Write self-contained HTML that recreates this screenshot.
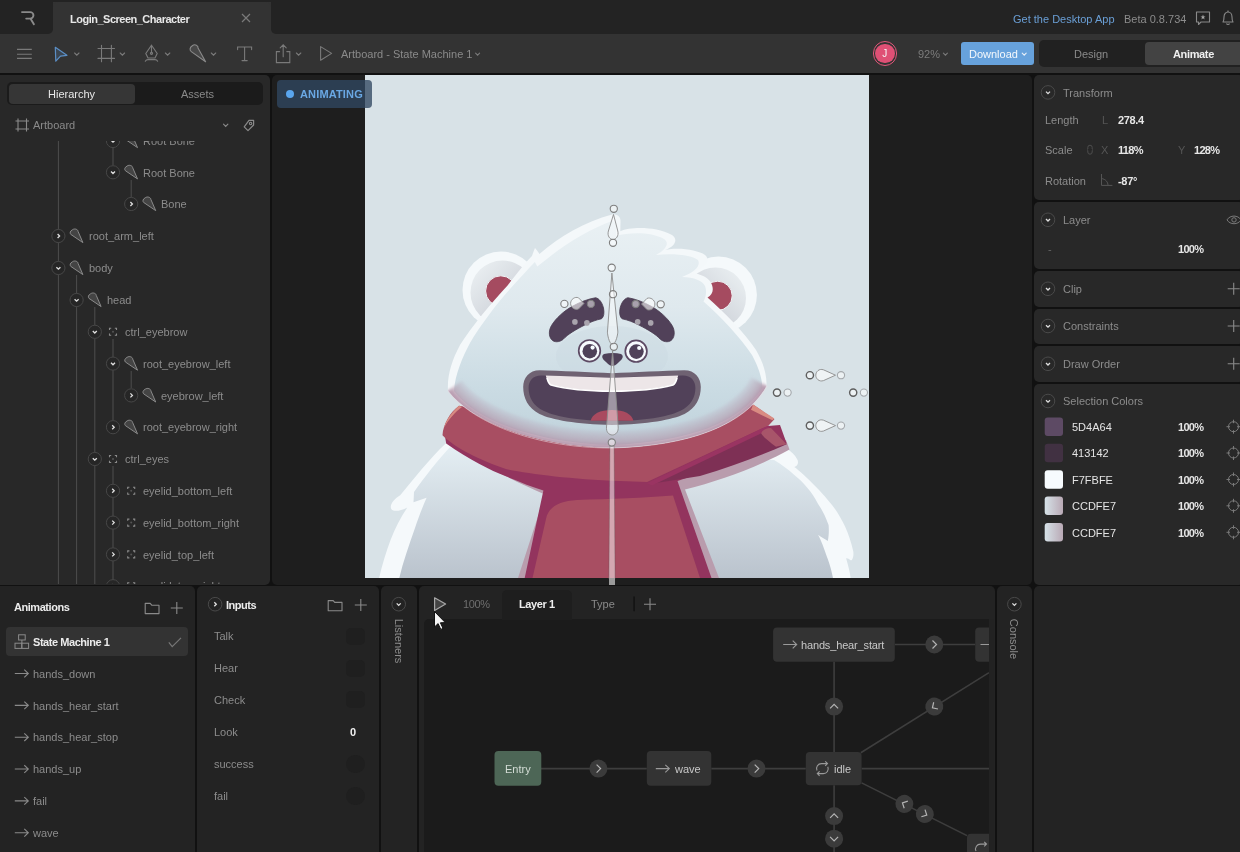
<!DOCTYPE html>
<html><head><meta charset="utf-8">
<style>
*{box-sizing:border-box;margin:0;padding:0}
html,body{width:1240px;height:852px;overflow:hidden;background:#111;font-family:"Liberation Sans",sans-serif;font-size:11px;color:#8c8c8c}
.a{position:absolute}
.t{position:absolute;white-space:nowrap;line-height:14px;will-change:transform}
.w{color:#e6e6e6}
.b{font-weight:bold;letter-spacing:-0.35px}
svg{position:absolute;overflow:visible}
</style></head><body>

<!-- TAB BAR -->
<div class="a" style="left:0;top:0;width:1240px;height:34px;background:#333"></div>
<div class="a" style="left:0;top:0;width:53px;height:34px;background:#232323;border-bottom-right-radius:5px"></div>
<div class="a" style="left:271px;top:0;width:969px;height:34px;background:#232323;border-bottom-left-radius:5px"></div>
<div class="a" style="left:53px;top:0;width:218px;height:2px;background:#232323"></div>
<div class="a" style="left:53px;top:2px;width:218px;height:6px;background:#333;border-radius:5px 5px 0 0"></div>

<!-- TOOLBAR -->
<div class="a" style="left:0;top:34px;width:1240px;height:38.5px;background:#333"></div>


<!-- TAB CONTENT -->
<svg style="left:0;top:0" width="60" height="34"><path d="M22,12.1 H30.2 A3.25,3.25 0 0 1 30.2,18.6 H26.2 M30.6,18.8 L33.9,24.2" fill="none" stroke="#8a8a8a" stroke-width="1.9" stroke-linecap="round"/></svg>
<div class="t w b" style="left:70px;top:12px;letter-spacing:-0.5px;color:#e8e8e8">Login_Screen_Character</div>
<svg style="left:240px;top:12px" width="12" height="12"><path d="M2,2 L10,10 M10,2 L2,10" stroke="#7a7a7a" stroke-width="1.2"/></svg>
<div class="t" style="left:1013px;top:12px;color:#6a9fd6">Get the Desktop App</div>
<div class="t" style="left:1123.5px;top:12px;color:#8c8c8c">Beta 0.8.734</div>
<svg style="left:1194px;top:10px" width="18" height="16"><path d="M2.5,2 H15.5 V12 H7 L4.5,14.5 V12 H2.5 Z" fill="none" stroke="#8a8a8a" stroke-width="1.1" stroke-linejoin="round"/><path d="M9,4.5 L9.7,6.5 L11.5,6.5 L10,7.6 L10.6,9.5 L9,8.3 L7.4,9.5 L8,7.6 L6.5,6.5 L8.3,6.5 Z" fill="#aaa"/></svg>
<svg style="left:1219px;top:9px" width="18" height="18"><path d="M4,13 C5,11.5 5,10 5,8 C5,5.2 6.8,3 9,3 C11.2,3 13,5.2 13,8 C13,10 13,11.5 14,13 Z M7.5,14.5 C8,15.8 10,15.8 10.5,14.5" fill="none" stroke="#8a8a8a" stroke-width="1.1" stroke-linejoin="round"/><path d="M9,1.5 V3" stroke="#8a8a8a" stroke-width="1.1"/></svg>

<!-- TOOLBAR CONTENT -->
<svg style="left:0;top:34px" width="320" height="38">
 <g fill="none" stroke="#7a7a7a" stroke-width="1.1">
  <path d="M17,15.4 H31.8 M17,20.2 H31.8 M17,24.4 H31.8"/>
 </g>
 <path d="M55.3,13.3 L66.9,21.3 L60.5,22.2 L55.8,27.2 Z" fill="#3b4652" stroke="#5b8fc6" stroke-width="1.2" stroke-linejoin="round"/>
 <g fill="none" stroke="#7a7a7a" stroke-width="1.1" stroke-linecap="round">
  <path d="M74.6,19 L76.8,21.2 L79,19"/>
  <path d="M101.5,11.3 V27.8 M111.4,11.3 V27.8 M98,14.5 H114.5 M98,24.4 H114.5"/>
  <path d="M120.2,19 L122.4,21.2 L124.6,19"/>
  <path d="M151.5,11.2 L157.2,19.5 L155,24 H148 L145.8,19.5 Z M151.5,11.2 V19 M145.3,27.2 C146,25.8 147,25.6 148,25.6 H155 C156,25.6 157,25.8 157.6,27.2"/>
  <circle cx="151.5" cy="19.3" r="1.1"/>
  <path d="M165.4,19 L167.6,21.2 L169.8,19"/>
  <path d="M211.3,19 L213.5,21.2 L215.7,19"/>
  <path d="M237.6,15.6 V13 H251.6 V15.6 M244.6,13 V26.6 M242,26.6 H247.2"/>
  <path d="M279.6,17.6 H276.4 V28.6 H289.8 V17.6 H286.8 M283.2,10.8 V22.8 M280.2,13.8 L283.2,10.8 L286.2,13.8"/>
  <path d="M296.4,19 L298.6,21.2 L300.8,19"/>
  <path d="M320.6,12.6 V26.2 L331.6,19.4 Z" stroke-linejoin="round"/>
 </g>
 <path d="M192.3,11.8 C195,9.6 198.5,11.6 198,14 L205.6,27.7 L191.3,17.6 C189.4,16.2 189.6,13.6 192.3,11.8 Z" fill="#484848" stroke="#8a8a8a" stroke-width="1.1" stroke-linejoin="round"/>
</svg>
<div class="t" style="left:340.5px;top:46.6px;color:#8a8a8a">Artboard - State Machine 1</div>
<svg style="left:470px;top:34px" width="12" height="38"><path d="M5.6,19.2 L7.6,21.2 L9.6,19.2" fill="none" stroke="#7a7a7a" stroke-width="1.1" stroke-linecap="round"/></svg>
<!-- avatar -->
<div class="a" style="left:872.9px;top:41.4px;width:24.5px;height:24.5px;border-radius:50%;border:1.4px solid #e0587a;background:#333"></div>
<div class="a" style="left:875.3px;top:43.8px;width:19.7px;height:19.7px;border-radius:50%;background:#df5075"></div>
<div class="t" style="left:875.3px;top:46.8px;width:19.7px;text-align:center;font-size:10px;color:#f6f6f6">J</div>
<div class="t" style="left:918px;top:46.6px;color:#7c7c7c">92%</div>
<svg style="left:940px;top:34px" width="12" height="38"><path d="M3.4,19.2 L5.4,21.2 L7.4,19.2" fill="none" stroke="#7a7a7a" stroke-width="1.1" stroke-linecap="round"/></svg>
<div class="a" style="left:961.2px;top:42.3px;width:73px;height:23px;border-radius:3px;background:#67a2dc"></div>
<div class="t" style="left:968.5px;top:46.6px;color:#f4f8fc">Download</div>
<svg style="left:1020px;top:34px" width="12" height="38"><path d="M2.2,19.2 L4.2,21.2 L6.2,19.2" fill="none" stroke="#e8f0f8" stroke-width="1.1" stroke-linecap="round"/></svg>
<div class="a" style="left:1039.3px;top:40.1px;width:210px;height:26.7px;border-radius:5px;background:#212121"></div>
<div class="a" style="left:1145px;top:42.3px;width:100px;height:23px;border-radius:4px;background:#434343"></div>
<div class="t" style="left:1073.5px;top:46.6px;color:#8a8a8a">Design</div>
<div class="t b" style="left:1173px;top:46.6px;color:#f0f0f0">Animate</div>

<!-- LEFT PANEL -->
<div class="a" style="left:0;top:75px;width:270.2px;height:509.6px;background:#282828;border-radius:0 5px 5px 0"></div>
<!-- LEFT CONTENT -->
<div class="a" style="left:0;top:141px;width:270px;height:443px;overflow:hidden">
<div class="a" style="left:0;top:-141px;width:270px;height:727px">
<svg style="left:0;top:0" width="270" height="727"><path d="M58.4,141 V584" stroke="#4e4e4e" stroke-width="1"/><path d="M76.6,275 V584" stroke="#4e4e4e" stroke-width="1"/><path d="M94.8,307 V584" stroke="#4e4e4e" stroke-width="1"/><path d="M113,339 V420" stroke="#4e4e4e" stroke-width="1"/><path d="M113,466 V584" stroke="#4e4e4e" stroke-width="1"/><path d="M131.2,371 V388" stroke="#4e4e4e" stroke-width="1"/><path d="M113,141 V165" stroke="#4e4e4e" stroke-width="1"/><path d="M131.2,180 V197" stroke="#4e4e4e" stroke-width="1"/><circle cx="113.0" cy="141" r="6.6" fill="#262626" stroke="#474747" stroke-width="1"/><path d="M111.0,140.2 L113.0,142.2 L115.0,140.2" fill="none" stroke="#e0e0e0" stroke-width="1.3"/><path d="M126.99999999999999,134.8 C129.39999999999998,133 132.7,134.5 132.7,136.5 L137.5,147.6 L125.39999999999999,139.4 C124.19999999999999,138.2 124.6,136 126.99999999999999,134.8 Z" fill="#444" stroke="#8a8a8a" stroke-width="1" stroke-linejoin="round"/><circle cx="113.0" cy="172.3" r="6.6" fill="#262626" stroke="#474747" stroke-width="1"/><path d="M111.0,171.5 L113.0,173.5 L115.0,171.5" fill="none" stroke="#e0e0e0" stroke-width="1.3"/><path d="M126.99999999999999,166.10000000000002 C129.39999999999998,164.3 132.7,165.8 132.7,167.8 L137.5,178.9 L125.39999999999999,170.70000000000002 C124.19999999999999,169.5 124.6,167.3 126.99999999999999,166.10000000000002 Z" fill="#444" stroke="#8a8a8a" stroke-width="1" stroke-linejoin="round"/><circle cx="131.2" cy="204" r="6.6" fill="#262626" stroke="#474747" stroke-width="1"/><path d="M130.39999999999998,202 L132.39999999999998,204 L130.39999999999998,206" fill="none" stroke="#e0e0e0" stroke-width="1.3"/><path d="M145.2,197.8 C147.59999999999997,196 150.89999999999998,197.5 150.89999999999998,199.5 L155.7,210.6 L143.59999999999997,202.4 C142.39999999999998,201.2 142.79999999999998,199 145.2,197.8 Z" fill="#444" stroke="#8a8a8a" stroke-width="1" stroke-linejoin="round"/><circle cx="58.4" cy="236" r="6.6" fill="#262626" stroke="#474747" stroke-width="1"/><path d="M57.6,234 L59.6,236 L57.6,238" fill="none" stroke="#e0e0e0" stroke-width="1.3"/><path d="M72.39999999999999,229.8 C74.8,228 78.1,229.5 78.1,231.5 L82.89999999999999,242.6 L70.8,234.4 C69.6,233.2 70.0,231 72.39999999999999,229.8 Z" fill="#444" stroke="#8a8a8a" stroke-width="1" stroke-linejoin="round"/><circle cx="58.4" cy="268" r="6.6" fill="#262626" stroke="#474747" stroke-width="1"/><path d="M56.4,267.2 L58.4,269.2 L60.4,267.2" fill="none" stroke="#e0e0e0" stroke-width="1.3"/><path d="M72.39999999999999,261.8 C74.8,260 78.1,261.5 78.1,263.5 L82.89999999999999,274.6 L70.8,266.4 C69.6,265.2 70.0,263 72.39999999999999,261.8 Z" fill="#444" stroke="#8a8a8a" stroke-width="1" stroke-linejoin="round"/><circle cx="76.6" cy="300" r="6.6" fill="#262626" stroke="#474747" stroke-width="1"/><path d="M74.6,299.2 L76.6,301.2 L78.6,299.2" fill="none" stroke="#e0e0e0" stroke-width="1.3"/><path d="M90.6,293.8 C93.0,292 96.3,293.5 96.3,295.5 L101.1,306.6 L89.0,298.4 C87.8,297.2 88.2,295 90.6,293.8 Z" fill="#444" stroke="#8a8a8a" stroke-width="1" stroke-linejoin="round"/><circle cx="94.8" cy="331.8" r="6.6" fill="#262626" stroke="#474747" stroke-width="1"/><path d="M92.8,331.0 L94.8,333.0 L96.8,331.0" fill="none" stroke="#e0e0e0" stroke-width="1.3"/><path d="M109.5,330.0 V328.3 H111.2 M114.8,328.3 H116.5 V330.0 M116.5,333.6 V335.3 H114.8 M111.2,335.3 H109.5 V333.6" fill="none" stroke="#8a8a8a" stroke-width="1.1"/><circle cx="113.0" cy="331.8" r="1" fill="#555"/><circle cx="113.0" cy="363.6" r="6.6" fill="#262626" stroke="#474747" stroke-width="1"/><path d="M111.0,362.8 L113.0,364.8 L115.0,362.8" fill="none" stroke="#e0e0e0" stroke-width="1.3"/><path d="M126.99999999999999,357.40000000000003 C129.39999999999998,355.6 132.7,357.1 132.7,359.1 L137.5,370.20000000000005 L125.39999999999999,362.0 C124.19999999999999,360.8 124.6,358.6 126.99999999999999,357.40000000000003 Z" fill="#444" stroke="#8a8a8a" stroke-width="1" stroke-linejoin="round"/><circle cx="131.2" cy="395.4" r="6.6" fill="#262626" stroke="#474747" stroke-width="1"/><path d="M130.39999999999998,393.4 L132.39999999999998,395.4 L130.39999999999998,397.4" fill="none" stroke="#e0e0e0" stroke-width="1.3"/><path d="M145.2,389.2 C147.59999999999997,387.4 150.89999999999998,388.9 150.89999999999998,390.9 L155.7,402.0 L143.59999999999997,393.79999999999995 C142.39999999999998,392.59999999999997 142.79999999999998,390.4 145.2,389.2 Z" fill="#444" stroke="#8a8a8a" stroke-width="1" stroke-linejoin="round"/><circle cx="113.0" cy="427.2" r="6.6" fill="#262626" stroke="#474747" stroke-width="1"/><path d="M112.2,425.2 L114.2,427.2 L112.2,429.2" fill="none" stroke="#e0e0e0" stroke-width="1.3"/><path d="M126.99999999999999,421.0 C129.39999999999998,419.2 132.7,420.7 132.7,422.7 L137.5,433.8 L125.39999999999999,425.59999999999997 C124.19999999999999,424.4 124.6,422.2 126.99999999999999,421.0 Z" fill="#444" stroke="#8a8a8a" stroke-width="1" stroke-linejoin="round"/><circle cx="94.8" cy="459" r="6.6" fill="#262626" stroke="#474747" stroke-width="1"/><path d="M92.8,458.2 L94.8,460.2 L96.8,458.2" fill="none" stroke="#e0e0e0" stroke-width="1.3"/><path d="M109.5,457.2 V455.5 H111.2 M114.8,455.5 H116.5 V457.2 M116.5,460.8 V462.5 H114.8 M111.2,462.5 H109.5 V460.8" fill="none" stroke="#8a8a8a" stroke-width="1.1"/><circle cx="113.0" cy="459" r="1" fill="#555"/><circle cx="113.0" cy="490.8" r="6.6" fill="#262626" stroke="#474747" stroke-width="1"/><path d="M112.2,488.8 L114.2,490.8 L112.2,492.8" fill="none" stroke="#e0e0e0" stroke-width="1.3"/><path d="M127.69999999999999,489.0 V487.3 H129.39999999999998 M133.0,487.3 H134.7 V489.0 M134.7,492.6 V494.3 H133.0 M129.39999999999998,494.3 H127.69999999999999 V492.6" fill="none" stroke="#8a8a8a" stroke-width="1.1"/><circle cx="131.2" cy="490.8" r="1" fill="#555"/><circle cx="113.0" cy="522.6" r="6.6" fill="#262626" stroke="#474747" stroke-width="1"/><path d="M112.2,520.6 L114.2,522.6 L112.2,524.6" fill="none" stroke="#e0e0e0" stroke-width="1.3"/><path d="M127.69999999999999,520.8000000000001 V519.1 H129.39999999999998 M133.0,519.1 H134.7 V520.8000000000001 M134.7,524.4 V526.1 H133.0 M129.39999999999998,526.1 H127.69999999999999 V524.4" fill="none" stroke="#8a8a8a" stroke-width="1.1"/><circle cx="131.2" cy="522.6" r="1" fill="#555"/><circle cx="113.0" cy="554.4" r="6.6" fill="#262626" stroke="#474747" stroke-width="1"/><path d="M112.2,552.4 L114.2,554.4 L112.2,556.4" fill="none" stroke="#e0e0e0" stroke-width="1.3"/><path d="M127.69999999999999,552.6 V550.9 H129.39999999999998 M133.0,550.9 H134.7 V552.6 M134.7,556.1999999999999 V557.9 H133.0 M129.39999999999998,557.9 H127.69999999999999 V556.1999999999999" fill="none" stroke="#8a8a8a" stroke-width="1.1"/><circle cx="131.2" cy="554.4" r="1" fill="#555"/><circle cx="113.0" cy="586.2" r="6.6" fill="#262626" stroke="#474747" stroke-width="1"/><path d="M112.2,584.2 L114.2,586.2 L112.2,588.2" fill="none" stroke="#e0e0e0" stroke-width="1.3"/><path d="M127.69999999999999,584.4000000000001 V582.7 H129.39999999999998 M133.0,582.7 H134.7 V584.4000000000001 M134.7,588.0 V589.7 H133.0 M129.39999999999998,589.7 H127.69999999999999 V588.0" fill="none" stroke="#8a8a8a" stroke-width="1.1"/><circle cx="131.2" cy="586.2" r="1" fill="#555"/></svg>
<div class="t" style="left:143.2px;top:134.2px">Root Bone</div>
<div class="t" style="left:143.2px;top:165.5px">Root Bone</div>
<div class="t" style="left:161.4px;top:197.2px">Bone</div>
<div class="t" style="left:88.6px;top:229.2px">root_arm_left</div>
<div class="t" style="left:88.6px;top:261.2px">body</div>
<div class="t" style="left:106.8px;top:293.2px">head</div>
<div class="t" style="left:125.0px;top:325.0px">ctrl_eyebrow</div>
<div class="t" style="left:143.2px;top:356.8px">root_eyebrow_left</div>
<div class="t" style="left:161.4px;top:388.6px">eyebrow_left</div>
<div class="t" style="left:143.2px;top:420.4px">root_eyebrow_right</div>
<div class="t" style="left:125.0px;top:452.2px">ctrl_eyes</div>
<div class="t" style="left:143.2px;top:484.0px">eyelid_bottom_left</div>
<div class="t" style="left:143.2px;top:515.8px">eyelid_bottom_right</div>
<div class="t" style="left:143.2px;top:547.6px">eyelid_top_left</div>
<div class="t" style="left:143.2px;top:579.4px">eyelid_top_right</div>
</div></div>
<div class="a" style="left:7px;top:82.3px;width:256px;height:22.5px;border-radius:5px;background:#1b1b1b"></div>
<div class="a" style="left:8.5px;top:84px;width:126px;height:19.5px;border-radius:4px;background:#363636"></div>
<div class="t" style="left:47.5px;top:87.4px;color:#e8e8e8">Hierarchy</div>
<div class="t" style="left:181px;top:87.4px;color:#8a8a8a">Assets</div>
<svg style="left:0;top:110px" width="270" height="30"><g fill="none" stroke="#8a8a8a" stroke-width="1.1"><path d="M18,8.5 V21.5 M26.5,8.5 V21.5 M15.5,11 H29 M15.5,19 H29"/><path d="M223.5,14.2 L225.7,16.4 L227.9,14.2" stroke-linecap="round"/><path d="M249,10.3 H253.6 V15 L248,20.6 L244.2,16.8 Z" stroke-linejoin="round" stroke-width="1.2"/><circle cx="250.6" cy="13.5" r="1.2"/></g></svg>
<div class="t" style="left:33.2px;top:118.4px;color:#8a8a8a">Artboard</div>

<!-- CANVAS -->
<div class="a" style="left:272.1px;top:74.5px;width:760.2px;height:510.1px;background:#1e1e1e;border-radius:5px"></div>
<div class="a" style="left:365px;top:75px;width:504px;height:503px;background:#d8e2e7"></div>

<!-- CANVAS CONTENT -->
<svg style="left:365px;top:75px" width="504" height="503" viewBox="365 75 504 503">
<defs>
 <linearGradient id="hg" x1="0" y1="213" x2="0" y2="448" gradientUnits="userSpaceOnUse">
  <stop offset="0" stop-color="#eaf1f4"/><stop offset="0.4" stop-color="#dfe9ee"/><stop offset="0.75" stop-color="#cadbe3"/><stop offset="1" stop-color="#bfd2db"/>
 </linearGradient>
 <linearGradient id="bg1" x1="0" y1="440" x2="0.3" y2="578" gradientUnits="userSpaceOnUse">
  <stop offset="0" stop-color="#e2ecf1"/><stop offset="1" stop-color="#bcc6d0"/>
 </linearGradient>
 <linearGradient id="bodyg" x1="0" y1="0" x2="0" y2="1">
  <stop offset="0" stop-color="#e3edf2"/><stop offset="1" stop-color="#bec6d0"/>
 </linearGradient>
 <radialGradient id="bodyr" cx="612" cy="455" r="235" gradientUnits="userSpaceOnUse"><stop offset="0.3" stop-color="#e2ecf1"/><stop offset="1" stop-color="#b5bec9"/></radialGradient>
 <linearGradient id="bodyv" x1="0" y1="450" x2="0" y2="578" gradientUnits="userSpaceOnUse"><stop offset="0" stop-color="#e3edf2"/><stop offset="1" stop-color="#bac3cd"/></linearGradient>
 <linearGradient id="earg" x1="0" y1="0" x2="1" y2="1">
  <stop offset="0" stop-color="#eef3f5"/><stop offset="1" stop-color="#c0c4cd"/>
 </linearGradient>
 <linearGradient id="earg2" x1="1" y1="0" x2="0" y2="1">
  <stop offset="0" stop-color="#eef3f5"/><stop offset="1" stop-color="#c0c4cd"/>
 </linearGradient>
 <linearGradient id="ching" x1="0" y1="0" x2="0" y2="1">
  <stop offset="0" stop-color="#c2d4dd" stop-opacity="0"/><stop offset="0.55" stop-color="#bdb0bd"/><stop offset="1" stop-color="#b393a8"/>
 </linearGradient>
</defs>
<rect x="365" y="75" width="504" height="503" fill="#d8e2e7"/>

<!-- BODY -->
<path d="M379.1,578 C386,550 394,527 407.3,507.5 C401,511 394,512 391.4,509.3 C389,505 394,499 400.2,495.2 C413,480 430,458 446,443.2 L786.4,448.5 C791,451 795,455 797,459 C799,462 798,466 794.3,467 C805,475 824,494 833.9,507.4 C842,519 849,532 853.3,551.4 C854,557 852,561 850.6,560.2 C849,559 847,558 846.2,558.5 C848,565 850,572 850.6,578 Z" fill="#f5f9fb"/>
<path d="M449.5,447.6 C438,460 424,478 414,492 L413.5,502.2 L426.6,497.8 C423,506 419,516 415,528 C409,545 403,562 399.3,578 L833,578 C831,568 829,562 826.9,556.7 C824,548 821,540 818.1,534.7 C821,537 825,539 827.8,540.9 C829,535 829,530 828.6,525 C825,515 821,508 818.1,503.9 C812,492 803,482 795.2,475.8 C788,469 781,464 774.1,459.9 Z" fill="url(#bodyv)"/>

<!-- SCARF vertical + shadows -->
<path d="M446,440 C470,458 510,480 545,494.5 L518,578 L719,578 L685,489.5 C720,481 760,466 789.5,449.5 L786,440 Z" fill="#b99cad"/>
<path d="M444,430 L446.2,443.4 C470,460 490,470 505.9,476.3 C520,482 532,487 543.4,490.4 L524.7,578 L711.5,578 L677.5,481 L786.7,443.4 L780,425 L612,440 Z" fill="#93345e"/>
<path d="M532.5,578 L546,519 C548,508 558,501 577,500 C610,499 645,498 673,495.5 L700,578 Z" fill="#a84e62"/>
<!-- scarf band -->
<path d="M442.5,435.2 C443,425 450,412 459,405.8 L612,428 L753,404.5 L774.4,419.2 L768.6,425.4 L647,482 L620,481 C570,479 530,474 505.9,469 C480,460 455,448 442.5,435.2 Z" fill="#a84e62"/>
<path d="M459,405.8 C452,412 446,420 444,428 C448,420 455,412 462,407 Z" fill="#d98b82"/>
<path d="M751,409.8 L753.2,404.6 L774.4,418.6 L772.4,420.3 Z" fill="#d98b82"/>
<!-- flap -->
<path d="M650,484 L769.5,427 L786.7,444.3 C760,456 730,467 700,476 Z" fill="#7e3055"/>
<path d="M647,483.3 L768.6,425.4 L770.5,429 L652,485.5 Z" fill="#9a3462"/>
<path d="M761.2,433.6 C762,430 766,428 771,427.9 L786.7,444.3 L776,446.8 C770,442 764,438 761.2,433.6 Z" fill="#a8556a"/>

<!-- EARS -->
<circle cx="501" cy="290" r="38.5" fill="#f5f9fb"/>
<circle cx="502.5" cy="292.5" r="32" fill="url(#earg)"/>
<circle cx="500.8" cy="291" r="15.2" fill="#a54b60" stroke="#f0f4f6" stroke-width="1"/>
<circle cx="718.5" cy="295" r="38.4" fill="#f5f9fb"/>
<circle cx="715.5" cy="298" r="30.5" fill="url(#earg2)"/>
<circle cx="717.6" cy="295.8" r="14.6" fill="#a54b60" stroke="#f0f4f6" stroke-width="1"/>

<!-- HEAD -->
<path d="M612,214.5 C617,214 621,216 620.5,222 L620.3,231.2 C630,227 655,226 672,235 C678,239 676,246 665.3,250.1 C678,247 698,250 705,255 C711,260 706,268 690,273.3 C700,273 710,278 712,285 C714,291 712,295 707.5,297.5 C724,312 745,333 756,350 C763,362 767,374 766.5,386 C745,425 690,446 612,448 C530,446 470,420 448,391 C447,375 452,360 460,345 C472,326 492,302 508,285 C517,273 525,263 532,256 C533,253 534,250 535,248 C537,250 539,253 539.4,254 C560,236 585,222 612,214.5 Z" fill="#f4f8fa"/>
<path d="M612,221 C615,221 617,224 616,236 C630,232 652,232 664,239 C670,243 666,250 656,255 C672,253 692,255 698,260 C701,266 695,272 682,277 C694,277 703,281 705,286 C707,291 706,297 703.5,301.5 C720,316 741,338 752,355 C758,366 762,377 762.5,388 C740,422 690,442 612,445 C535,443 475,420 454,391 C455,375 462,358 470,343 C480,326 497,303 510,289 C520,278 527,270 534.9,262 L537.3,266.6 C562,246 587,230 612,221 Z" fill="url(#hg)"/>
<!-- chin band -->
<clipPath id="hclip"><path d="M612,214.5 C617,214 621,216 620.5,222 L620.3,231.2 C630,227 655,226 672,235 C678,239 676,246 665.3,250.1 C678,247 698,250 705,255 C711,260 706,268 690,273.3 C700,273 710,278 712,285 C714,291 712,295 707.5,297.5 C724,312 745,333 756,350 C763,362 767,374 766.5,386 C745,425 690,446 612,448 C530,446 470,420 448,391 C447,375 452,360 460,345 C472,326 492,302 508,285 C517,273 525,263 532,256 C533,253 534,250 535,248 C537,250 539,253 539.4,254 C560,236 585,222 612,214.5 Z"/></clipPath>
<filter id="bl1" x="-20%" y="-50%" width="140%" height="200%"><feGaussianBlur stdDeviation="1.5"/></filter>
<filter id="bl4" x="-20%" y="-50%" width="140%" height="200%"><feGaussianBlur stdDeviation="4"/></filter>
<g clip-path="url(#hclip)"><g filter="url(#bl1)" fill="none" stroke="#b393a8"><path d="M448,391 C470,420 530,448 612,448 C690,448 745,425 766.5,386" stroke-width="34" stroke-opacity="0.22"/><path d="M448,391 C470,420 530,448 612,448 C690,448 745,425 766.5,386" stroke-width="26" stroke-opacity="0.22"/><path d="M448,391 C470,420 530,448 612,448 C690,448 745,425 766.5,386" stroke-width="18" stroke-opacity="0.25"/><path d="M448,391 C470,420 530,448 612,448 C690,448 745,425 766.5,386" stroke-width="10" stroke-opacity="0.45"/><path d="M448,391 C470,420 530,448 612,448 C690,448 745,425 766.5,386" stroke-width="5" stroke-opacity="0.6"/></g></g>
<path d="M448,391 C470,420 530,448 612,448 C690,446 745,425 767.5,386" fill="none" stroke="#e6dde3" stroke-width="0.8" opacity="0.7"/>
<!-- muzzle patch -->
<ellipse cx="612" cy="356" rx="56" ry="30" fill="#c9d8e0" opacity="0.35"/>

<!-- EYEBROWS -->
<path id="ebl" d="M595.7,297.7 C599,298.5 602,302 603.5,308 C604.5,313 603.8,317 601.5,318.8 C596,320 590,322 584.4,325.2 C576,329.5 568,334 563,339.5 C559,342.5 554,342.5 551.5,339.5 C548.5,336 548.8,330 551.5,325.5 C556,318 564,311 572,306.5 C580,302 588,299 595.7,297.7 Z" fill="#514159" stroke="#473a4e" stroke-width="0.8"/>
<path d="M595.7,297.7 C599,298.5 602,302 603.5,308 C604.5,313 603.8,317 601.5,318.8 C596,320 590,322 584.4,325.2 C576,329.5 568,334 563,339.5 C559,342.5 554,342.5 551.5,339.5 C548.5,336 548.8,330 551.5,325.5 C556,318 564,311 572,306.5 C580,302 588,299 595.7,297.7 Z" transform="translate(1223.6,0) scale(-1,1)" fill="#514159" stroke="#473a4e" stroke-width="0.8"/>

<!-- EYES -->
<circle cx="589.5" cy="350.8" r="10.8" fill="#f7fbfe" stroke="#5d4a64" stroke-width="1.7"/>
<circle cx="589.8" cy="351.2" r="7.3" fill="#4f4159"/>
<circle cx="592.6" cy="347.6" r="2.1" fill="#f7fbfe"/>
<circle cx="636.1" cy="351.2" r="10.8" fill="#f7fbfe" stroke="#5d4a64" stroke-width="1.7"/>
<circle cx="636.4" cy="351.6" r="7.3" fill="#4f4159"/>
<circle cx="639.2" cy="348" r="2.1" fill="#f7fbfe"/>
<!-- NOSE -->
<path d="M604,354 C610,352.5 616,352.5 621,354 C624,355.5 623,359 619,362 C616,365 614,366 612.5,366 C611,366 609,365 606,362 C602,359 601,355.5 604,354 Z" fill="#4f4159"/>

<!-- MOUTH -->
<path d="M539.7,370.3 C560,370.8 590,372.3 612,373.3 C634,372.3 664,370.8 684.3,370.3 C695,370.3 700.8,378 700.8,387 C700.8,398 696,408 684.5,414 C672,420 648,424 612,425 C576,424 552,420 539.5,414 C528,408 523.2,398 523.2,387 C523.2,378 529,370.3 539.7,370.3 Z" fill="#6f6272"/>
<path d="M541,375.6 C565,376 595,377 612,377.5 C629,377 659,376 683,375.6 C691,375.6 695.4,381 695.4,388 C695.4,397 691,406 680,411 C667,417 645,420.8 612,421 C579,420.8 557,417 544,411 C533,406 528.6,397 528.6,388 C528.6,381 533,375.6 541,375.6 Z" fill="#514159"/>
<path d="M590.6,420.8 C592,414 600,410 612,410 C624,410 632,414 633.4,420.8 Z" fill="#a94a5f"/>
<path d="M545.8,375.6 L612,377.7 L678.2,375.6 C677,380 675,384 673.7,384.7 C660,388 635,391.6 612,391.6 C589,391.6 564,388 550.3,384.7 C549,384 547,380 545.8,375.6 Z" fill="#ede6e8"/>
<path d="M547,378 C548,382 549,384 551,385 C564,388.5 589,391.2 612,391.2 C635,391.2 660,388.5 673,385 C675,384 676,382 677,378" fill="none" stroke="#ffffff" stroke-width="1.6"/>

<!-- BONES OVERLAY -->
<g fill="rgba(255,255,255,0.35)" stroke="#8c8c8c" stroke-width="0.9">
 <path d="M609.9,446 L614.1,446 L615.1,579 L608.9,579 Z" fill="rgba(255,255,255,0.5)" stroke="rgba(80,80,80,0.45)" stroke-width="0.7"/>
 <path d="M613.5,214.5 L608.4,231 C607,236 610,239.5 613,239.5 C616,239.5 619,236 617.8,231 Z"/>
 <path d="M611.9,273 L607.5,331 C607,333 609,344 612.5,344.5 C616,344 618.2,333 617.8,331 Z" fill="rgba(255,255,255,0.45)"/>
 <path d="M612.6,351 L606.5,427 C606,432 609,435 612.3,435 C615.6,435 618.6,432 618.2,427 Z" fill="rgba(255,255,255,0.45)"/>
 <path d="M584,303.4 L578.5,297.8 C575,296.3 570.6,299.3 570.6,303.4 C570.6,307.5 575,310.5 578.5,309 Z" fill="rgba(255,255,255,0.6)"/>
 <path d="M641.5,304 L647,298.4 C650.5,296.9 654.9,299.9 654.9,304 C654.9,308.1 650.5,311.1 647,309.6 Z" fill="rgba(255,255,255,0.6)"/>
 <path d="M835.5,375.2 L823.5,369.8 C819,368.3 815.8,371.8 815.8,375.2 C815.8,378.6 819,382.1 823.5,380.6 Z" fill="rgba(255,255,255,0.6)"/>
 <path d="M835.5,425.6 L823.5,420.2 C819,418.7 815.8,422.2 815.8,425.6 C815.8,429 819,432.5 823.5,431 Z" fill="rgba(255,255,255,0.6)"/>
</g>
<g fill="rgba(255,255,255,0.5)" stroke="#7e7e7e" stroke-width="1.1">
 <circle cx="613.8" cy="208.8" r="3.6"/>
 <circle cx="613" cy="242.8" r="3.6"/>
 <circle cx="611.7" cy="267.7" r="3.6"/>
 <circle cx="613" cy="294.2" r="3.6"/>
 <circle cx="613.8" cy="346.8" r="3.6"/>
 <circle cx="611.8" cy="442.5" r="3.6"/>
 <circle cx="564.4" cy="303.9" r="3.6"/>
 <circle cx="590.9" cy="303.9" r="3.6"/>
 <circle cx="635.7" cy="304" r="3.6"/>
 <circle cx="660.7" cy="304.3" r="3.6"/>
 <circle cx="809.9" cy="375.2" r="3.6" stroke="#5e5e5e" stroke-width="1.4"/>
 <circle cx="841" cy="375.2" r="3.6" stroke="#a4a8ac"/>
 <circle cx="777" cy="392.6" r="3.6" stroke="#5e5e5e" stroke-width="1.4"/>
 <circle cx="787.6" cy="392.6" r="3.6" stroke="#a4a8ac"/>
 <circle cx="853.2" cy="392.6" r="3.6" stroke="#5e5e5e" stroke-width="1.4"/>
 <circle cx="863.9" cy="392.6" r="3.6" stroke="#a4a8ac"/>
 <circle cx="809.9" cy="425.6" r="3.6" stroke="#5e5e5e" stroke-width="1.4"/>
 <circle cx="841" cy="425.6" r="3.6" stroke="#a4a8ac"/>
</g>
<g fill="#a9a4ad" stroke="none">
 <circle cx="574.9" cy="321.9" r="2.8"/><circle cx="586.9" cy="322.9" r="2.8"/>
 <circle cx="637.7" cy="321.9" r="2.8"/><circle cx="650.7" cy="322.9" r="2.8"/>
</g>
</svg>
<div class="a" style="left:608.9px;top:578px;width:6.2px;height:6.7px;background:#9a9a9a"></div>
<div class="a" style="left:277.4px;top:80.1px;width:94.3px;height:27.9px;border-radius:4px;background:rgba(49,72,97,0.78)"></div>
<div class="a" style="left:285.8px;top:89.9px;width:8.2px;height:8.2px;border-radius:50%;background:#5aa6ee"></div>
<div class="t b" style="left:299.5px;top:87.3px;color:#6aa8e4;letter-spacing:0.15px">ANIMATING</div>

<!-- RIGHT PANEL cards -->
<div class="a" style="left:1034.2px;top:74.5px;width:210px;height:125px;background:#282828;border-radius:5px"></div>
<div class="a" style="left:1034.2px;top:201.5px;width:210px;height:67.8px;background:#282828;border-radius:5px"></div>
<div class="a" style="left:1034.2px;top:271px;width:210px;height:35.6px;background:#282828;border-radius:5px"></div>
<div class="a" style="left:1034.2px;top:308.6px;width:210px;height:35.6px;background:#282828;border-radius:5px"></div>
<div class="a" style="left:1034.2px;top:346.2px;width:210px;height:35.4px;background:#282828;border-radius:5px"></div>
<div class="a" style="left:1034.2px;top:383.5px;width:210px;height:201px;background:#282828;border-radius:5px"></div>

<!-- RIGHT CONTENT -->
<svg style="left:0;top:0" width="1240" height="600"><defs><linearGradient id="sg" x1="0" x2="1" y1="0" y2="0"><stop offset="0" stop-color="#d6e2e8"/><stop offset="1" stop-color="#b9a9b5"/></linearGradient></defs><circle cx="1048" cy="92.4" r="6.8" fill="none" stroke="#4a4a4a" stroke-width="1"/><path d="M1046,91.60000000000001 L1048,93.60000000000001 L1050,91.60000000000001" fill="none" stroke="#e0e0e0" stroke-width="1.3"/><circle cx="1048" cy="219.8" r="6.8" fill="none" stroke="#4a4a4a" stroke-width="1"/><path d="M1046,219.0 L1048,221.0 L1050,219.0" fill="none" stroke="#e0e0e0" stroke-width="1.3"/><circle cx="1048" cy="288.8" r="6.8" fill="none" stroke="#4a4a4a" stroke-width="1"/><path d="M1046,288.0 L1048,290.0 L1050,288.0" fill="none" stroke="#e0e0e0" stroke-width="1.3"/><circle cx="1048" cy="326" r="6.8" fill="none" stroke="#4a4a4a" stroke-width="1"/><path d="M1046,325.2 L1048,327.2 L1050,325.2" fill="none" stroke="#e0e0e0" stroke-width="1.3"/><circle cx="1048" cy="363.8" r="6.8" fill="none" stroke="#4a4a4a" stroke-width="1"/><path d="M1046,363.0 L1048,365.0 L1050,363.0" fill="none" stroke="#e0e0e0" stroke-width="1.3"/><circle cx="1048" cy="401" r="6.8" fill="none" stroke="#4a4a4a" stroke-width="1"/><path d="M1046,400.2 L1048,402.2 L1050,400.2" fill="none" stroke="#e0e0e0" stroke-width="1.3"/><path d="M1227.7,288.8 H1239.7 M1233.7,282.8 V294.8" stroke="#8a8a8a" stroke-width="1.1"/><path d="M1227.7,326 H1239.7 M1233.7,320 V332" stroke="#8a8a8a" stroke-width="1.1"/><path d="M1227.7,363.8 H1239.7 M1233.7,357.8 V369.8" stroke="#8a8a8a" stroke-width="1.1"/><path d="M1227,219.9 C1230,214.8 1238,214.8 1241,219.9 C1238,225 1230,225 1227,219.9 Z" fill="none" stroke="#7a7a7a" stroke-width="1"/><circle cx="1234" cy="219.9" r="2.2" fill="none" stroke="#7a7a7a" stroke-width="1"/><rect x="1087.8" y="145.2" width="4.4" height="9" rx="2.2" fill="none" stroke="#4e4e4e" stroke-width="1"/><path d="M1087.8,149.7 H1092.2" stroke="#262626" stroke-width="1.4"/><path d="M1101.5,174 V185.4 H1112.4 M1101.5,178.6 C1105.5,179 1108,182 1108,185.4" fill="none" stroke="#555" stroke-width="1"/><rect x="1044.7" y="417.5" width="18.3" height="18.4" rx="3" fill="#5d4a64"/><circle cx="1233.5" cy="426.7" r="5" fill="none" stroke="#7a7a7a" stroke-width="1"/><path d="M1226.5,426.7 H1230.0 M1237.0,426.7 H1240.5 M1233.5,419.7 V423.2 M1233.5,430.2 V433.7" stroke="#7a7a7a" stroke-width="1"/><rect x="1044.7" y="443.8" width="18.3" height="18.4" rx="3" fill="#413142"/><circle cx="1233.5" cy="453" r="5" fill="none" stroke="#7a7a7a" stroke-width="1"/><path d="M1226.5,453 H1230.0 M1237.0,453 H1240.5 M1233.5,446 V449.5 M1233.5,456.5 V460" stroke="#7a7a7a" stroke-width="1"/><rect x="1044.7" y="470.3" width="18.3" height="18.4" rx="3" fill="#f7fbfe"/><circle cx="1233.5" cy="479.5" r="5" fill="none" stroke="#7a7a7a" stroke-width="1"/><path d="M1226.5,479.5 H1230.0 M1237.0,479.5 H1240.5 M1233.5,472.5 V476.0 M1233.5,483.0 V486.5" stroke="#7a7a7a" stroke-width="1"/><rect x="1044.7" y="496.6" width="18.3" height="18.4" rx="3" fill="url(#sg)"/><circle cx="1233.5" cy="505.8" r="5" fill="none" stroke="#7a7a7a" stroke-width="1"/><path d="M1226.5,505.8 H1230.0 M1237.0,505.8 H1240.5 M1233.5,498.8 V502.3 M1233.5,509.3 V512.8" stroke="#7a7a7a" stroke-width="1"/><rect x="1044.7" y="523.0999999999999" width="18.3" height="18.4" rx="3" fill="url(#sg)"/><circle cx="1233.5" cy="532.3" r="5" fill="none" stroke="#7a7a7a" stroke-width="1"/><path d="M1226.5,532.3 H1230.0 M1237.0,532.3 H1240.5 M1233.5,525.3 V528.8 M1233.5,535.8 V539.3" stroke="#7a7a7a" stroke-width="1"/></svg>
<div class="t" style="left:1062.5px;top:85.6px;color:#8c8c8c">Transform</div>
<div class="t" style="left:1062.5px;top:213.0px;color:#8c8c8c">Layer</div>
<div class="t" style="left:1062.5px;top:282.0px;color:#8c8c8c">Clip</div>
<div class="t" style="left:1062.5px;top:319.2px;color:#8c8c8c">Constraints</div>
<div class="t" style="left:1062.5px;top:357.0px;color:#8c8c8c">Draw Order</div>
<div class="t" style="left:1062.5px;top:394.2px;color:#8c8c8c">Selection Colors</div>
<div class="t" style="left:1045.2px;top:113.1px">Length</div>
<div class="t" style="left:1101.5px;top:113.1px;color:#555">L</div>
<div class="t w b" style="left:1117.7px;top:113.1px">278.4</div>
<div class="t" style="left:1045.2px;top:143.4px">Scale</div>
<div class="t" style="left:1101px;top:143.4px;color:#555">X</div>
<div class="t w b" style="left:1117.7px;top:143.4px;letter-spacing:-0.7px">118%</div>
<div class="t" style="left:1178px;top:143.4px;color:#555">Y</div>
<div class="t w b" style="left:1194px;top:143.4px;letter-spacing:-0.7px">128%</div>
<div class="t" style="left:1045.2px;top:173.5px">Rotation</div>
<div class="t w b" style="left:1117.7px;top:173.5px;letter-spacing:-0.3px">-87°</div>
<div class="t" style="left:1047.5px;top:242px;color:#666">-</div>
<div class="t w b" style="left:1177.8px;top:242px;letter-spacing:-0.7px">100%</div>
<div class="t w" style="left:1072.1px;top:419.9px;color:#e4e4e4">5D4A64</div>
<div class="t w b" style="left:1177.8px;top:419.9px;letter-spacing:-0.7px">100%</div>
<div class="t w" style="left:1072.1px;top:446.2px;color:#e4e4e4">413142</div>
<div class="t w b" style="left:1177.8px;top:446.2px;letter-spacing:-0.7px">100%</div>
<div class="t w" style="left:1072.1px;top:472.7px;color:#e4e4e4">F7FBFE</div>
<div class="t w b" style="left:1177.8px;top:472.7px;letter-spacing:-0.7px">100%</div>
<div class="t w" style="left:1072.1px;top:499.0px;color:#e4e4e4">CCDFE7</div>
<div class="t w b" style="left:1177.8px;top:499.0px;letter-spacing:-0.7px">100%</div>
<div class="t w" style="left:1072.1px;top:525.5px;color:#e4e4e4">CCDFE7</div>
<div class="t w b" style="left:1177.8px;top:525.5px;letter-spacing:-0.7px">100%</div>

<!-- BOTTOM PANELS -->
<div class="a" style="left:0;top:586.2px;width:195.2px;height:270px;background:#232323;border-radius:0 5px 0 0"></div>
<div class="a" style="left:197.2px;top:586.2px;width:181.8px;height:270px;background:#232323;border-radius:5px 5px 0 0"></div>
<div class="a" style="left:381px;top:586.2px;width:35.8px;height:270px;background:#232323;border-radius:5px 5px 0 0"></div>
<div class="a" style="left:418.8px;top:586.2px;width:576.4px;height:270px;background:#232323;border-radius:5px 5px 0 0"></div>
<div class="a" style="left:997.2px;top:586.2px;width:35.1px;height:270px;background:#232323;border-radius:5px 5px 0 0"></div>
<div class="a" style="left:1034.2px;top:586.2px;width:210px;height:270px;background:#232323;border-radius:5px 0 0 0"></div>

<!-- BOTTOM CONTENT -->
<div class="a" style="left:6.1px;top:627.4px;width:181.8px;height:28.4px;border-radius:4px;background:#333"></div>
<div class="a" style="left:424.3px;top:618.7px;width:564.6px;height:240px;background:#1b1b1b;border-radius:5px 0 0 0"></div>
<div class="a" style="left:988.9px;top:618.7px;width:5px;height:240px;background:#222"></div>
<div class="a" style="left:502px;top:590.2px;width:70.3px;height:30px;background:#1e1e1e;border-radius:5px 5px 0 0"></div>
<div class="t w b" style="left:519.4px;top:597.3px;letter-spacing:-0.4px;color:#eeeeee">Layer 1</div>
<div class="a" style="left:424.3px;top:618.7px;width:564.6px;height:240px;overflow:hidden"><svg style="left:-424.3px;top:-618.7px" width="1240" height="852"><g stroke="#3e3e3e" stroke-width="1.6" fill="none"><path d="M541,768.6 H646.8 M711.3,768.6 H805.8 M861.6,768.6 H989"/><path d="M894.8,644.5 H975.2"/><path d="M834.1,661.7 V752.1 M834.1,785.3 V852"/><path d="M860.8,752.7 L989,672.6"/><path d="M861.6,782.9 L967,835.6"/></g><rect x="494.5" y="751" width="46.799999999999955" height="34.799999999999955" rx="4" fill="#4d6656"/><rect x="646.8" y="751" width="64.5" height="34.799999999999955" rx="4" fill="#333"/><rect x="805.8" y="752.1" width="55.80000000000007" height="33.19999999999993" rx="4" fill="#333"/><rect x="773.1" y="627.6" width="121.69999999999993" height="34.10000000000002" rx="4" fill="#333"/><rect x="975.2" y="627.6" width="24.799999999999955" height="34.10000000000002" rx="4" fill="#333"/><rect x="967" y="833.8" width="33" height="26.200000000000045" rx="4" fill="#333"/><g transform="translate(598.4,768.6) rotate(0)"><circle r="9" fill="#3b3b3b"/><path d="M-1.8,-4 L2.2,0 L-1.8,4" fill="none" stroke="#b4b4b4" stroke-width="1.2"/></g><g transform="translate(756.5,768.6) rotate(0)"><circle r="9" fill="#3b3b3b"/><path d="M-1.8,-4 L2.2,0 L-1.8,4" fill="none" stroke="#b4b4b4" stroke-width="1.2"/></g><g transform="translate(934.3,644.5) rotate(0)"><circle r="9" fill="#3b3b3b"/><path d="M-1.8,-4 L2.2,0 L-1.8,4" fill="none" stroke="#b4b4b4" stroke-width="1.2"/></g><g transform="translate(834.1,706.6) rotate(-90)"><circle r="9" fill="#3b3b3b"/><path d="M-1.8,-4 L2.2,0 L-1.8,4" fill="none" stroke="#b4b4b4" stroke-width="1.2"/></g><g transform="translate(934.3,706.6) rotate(148)"><circle r="9" fill="#3b3b3b"/><path d="M-1.8,-4 L2.2,0 L-1.8,4" fill="none" stroke="#b4b4b4" stroke-width="1.2"/></g><g transform="translate(904.4,803.9) rotate(-153)"><circle r="9" fill="#3b3b3b"/><path d="M-1.8,-4 L2.2,0 L-1.8,4" fill="none" stroke="#b4b4b4" stroke-width="1.2"/></g><g transform="translate(924.8,814) rotate(27)"><circle r="9" fill="#3b3b3b"/><path d="M-1.8,-4 L2.2,0 L-1.8,4" fill="none" stroke="#b4b4b4" stroke-width="1.2"/></g><g transform="translate(834.1,816.1) rotate(-90)"><circle r="9" fill="#3b3b3b"/><path d="M-1.8,-4 L2.2,0 L-1.8,4" fill="none" stroke="#b4b4b4" stroke-width="1.2"/></g><g transform="translate(834.1,838.7) rotate(90)"><circle r="9" fill="#3b3b3b"/><path d="M-1.8,-4 L2.2,0 L-1.8,4" fill="none" stroke="#b4b4b4" stroke-width="1.2"/></g><path d="M655.8,768.6 H669.3 M665.3,764.8000000000001 L669.3,768.6 L665.3,772.4" fill="none" stroke="#9a9a9a" stroke-width="1.1"/><path d="M783.2,644.5 H796.7 M792.7,640.7 L796.7,644.5 L792.7,648.3" fill="none" stroke="#9a9a9a" stroke-width="1.1"/><path d="M980.5,644.5 H994.0 M990.0,640.7 L994.0,644.5 L990.0,648.3" fill="none" stroke="#9a9a9a" stroke-width="1.1"/><g fill="none" stroke="#9a9a9a" stroke-width="1.1"><path d="M817,770.5 C815.5,767 818,763.6 821.5,763.6 H827.5 M825.2,761.3 L827.5,763.6 L825.2,765.9"/><path d="M827.8,766.7 C829.3,770.2 826.8,773.6 823.3,773.6 H817.3 M819.6,771.3 L817.3,773.6 L819.6,775.9"/></g><g fill="none" stroke="#9a9a9a" stroke-width="1.1"><path d="M976,851 C974.5,847.5 977,844.1 980.5,844.1 H986.5 M984.2,841.8 L986.5,844.1 L984.2,846.4"/></g></svg></div>
<div class="t" style="left:504.8px;top:761.9px;color:#d3dcd5">Entry</div>
<div class="t" style="left:675.2px;top:761.9px;color:#c8c8c8">wave</div>
<div class="t" style="left:833.9px;top:761.9px;color:#c8c8c8">idle</div>
<div class="t" style="left:800.9px;top:637.7px;color:#c8c8c8;letter-spacing:-0.15px">hands_hear_start</div>
<svg style="left:0;top:0" width="1240" height="852"><path d="M145.2,603.4 H150.2 L151.7,605.1999999999999 H159.0 V613.6 H145.2 Z" fill="none" stroke="#8a8a8a" stroke-width="1.1" stroke-linejoin="round"/><path d="M170.8,608 H182.8 M176.8,602 V614" stroke="#8a8a8a" stroke-width="1.1"/><g fill="none" stroke="#8a8a8a" stroke-width="1"><rect x="18.6" y="634.8" width="6.6" height="5.2"/><rect x="15" y="643.2" width="6.8" height="5.2"/><rect x="21.8" y="643.2" width="6.8" height="5.2"/><path d="M21.9,640 V643.2"/></g><path d="M168.8,642.4 L172.2,646.6 L181,637.8" fill="none" stroke="#777" stroke-width="1.2"/><path d="M14.8,673.5 H28.3 M24.3,669.7 L28.3,673.5 L24.3,677.3" fill="none" stroke="#8a8a8a" stroke-width="1.1"/><path d="M14.8,705.35 H28.3 M24.3,701.5500000000001 L28.3,705.35 L24.3,709.15" fill="none" stroke="#8a8a8a" stroke-width="1.1"/><path d="M14.8,737.2 H28.3 M24.3,733.4000000000001 L28.3,737.2 L24.3,741.0" fill="none" stroke="#8a8a8a" stroke-width="1.1"/><path d="M14.8,769.05 H28.3 M24.3,765.25 L28.3,769.05 L24.3,772.8499999999999" fill="none" stroke="#8a8a8a" stroke-width="1.1"/><path d="M14.8,800.9 H28.3 M24.3,797.1 L28.3,800.9 L24.3,804.6999999999999" fill="none" stroke="#8a8a8a" stroke-width="1.1"/><path d="M14.8,832.75 H28.3 M24.3,828.95 L28.3,832.75 L24.3,836.55" fill="none" stroke="#8a8a8a" stroke-width="1.1"/><circle cx="215.1" cy="604.2" r="6.8" fill="none" stroke="#4a4a4a" stroke-width="1"/><path d="M214.29999999999998,602.2 L216.29999999999998,604.2 L214.29999999999998,606.2" fill="none" stroke="#e0e0e0" stroke-width="1.3"/><path d="M328.2,600.6 H333.2 L334.7,602.4 H342.0 V610.8000000000001 H328.2 Z" fill="none" stroke="#8a8a8a" stroke-width="1.1" stroke-linejoin="round"/><path d="M354.8,605 H366.8 M360.8,599 V611" stroke="#8a8a8a" stroke-width="1.1"/><circle cx="398.7" cy="604.2" r="6.8" fill="none" stroke="#4a4a4a" stroke-width="1"/><path d="M396.7,603.4000000000001 L398.7,605.4000000000001 L400.7,603.4000000000001" fill="none" stroke="#e0e0e0" stroke-width="1.3"/><circle cx="1014.4" cy="604.2" r="6.8" fill="none" stroke="#4a4a4a" stroke-width="1"/><path d="M1012.4,603.4000000000001 L1014.4,605.4000000000001 L1016.4,603.4000000000001" fill="none" stroke="#e0e0e0" stroke-width="1.3"/><path d="M434.6,597.8 V610.4 L445.6,604.1 Z" fill="#444" stroke="#a8a8a8" stroke-width="1.2" stroke-linejoin="round"/><path d="M634.1,596.5 V611.2" stroke="#121212" stroke-width="1.5"/><path d="M644,604.3 H656 M650,598.3 V610.3" stroke="#8a8a8a" stroke-width="1.1"/></svg>
<div class="t w b" style="left:13.5px;top:600.2px;letter-spacing:-0.45px;color:#ececec">Animations</div>
<div class="t w b" style="left:33px;top:634.8px;letter-spacing:-0.45px;color:#ececec">State Machine 1</div>
<div class="t" style="left:33.4px;top:666.6px;color:#8c8c8c">hands_down</div>
<div class="t" style="left:33.4px;top:698.5px;color:#8c8c8c">hands_hear_start</div>
<div class="t" style="left:33.4px;top:730.3px;color:#8c8c8c">hands_hear_stop</div>
<div class="t" style="left:33.4px;top:762.1px;color:#8c8c8c">hands_up</div>
<div class="t" style="left:33.4px;top:794.0px;color:#8c8c8c">fail</div>
<div class="t" style="left:33.4px;top:825.9px;color:#8c8c8c">wave</div>
<div class="t w b" style="left:226.3px;top:597.5px;letter-spacing:-0.5px;color:#ececec">Inputs</div>
<div class="t" style="left:213.8px;top:629.4px;color:#8c8c8c">Talk</div>
<div class="a" style="left:346.4px;top:627.6px;width:18.3px;height:17.2px;border-radius:5px;background:#1f1f1f"></div>
<div class="t" style="left:213.8px;top:661.3px;color:#8c8c8c">Hear</div>
<div class="a" style="left:346.4px;top:659.5px;width:18.3px;height:17.2px;border-radius:5px;background:#1f1f1f"></div>
<div class="t" style="left:213.8px;top:693.1px;color:#8c8c8c">Check</div>
<div class="a" style="left:346.4px;top:691.3px;width:18.3px;height:17.2px;border-radius:5px;background:#1f1f1f"></div>
<div class="t" style="left:213.8px;top:725.0px;color:#8c8c8c">Look</div>
<div class="t w b" style="left:349.5px;top:725.0px;color:#f0f0f0">0</div>
<div class="t" style="left:213.8px;top:756.8px;color:#8c8c8c">success</div>
<div class="a" style="left:346.4px;top:754.8px;width:18.3px;height:18.3px;border-radius:50%;background:#1f1f1f"></div>
<div class="t" style="left:213.8px;top:788.7px;color:#8c8c8c">fail</div>
<div class="a" style="left:346.4px;top:786.7px;width:18.3px;height:18.3px;border-radius:50%;background:#1f1f1f"></div>
<div class="t" style="left:376.2px;top:633.6px;width:45px;text-align:center;transform:rotate(90deg);will-change:auto;color:#8c8c8c">Listeners</div>
<div class="t" style="left:994.2px;top:632px;width:40.4px;text-align:center;transform:rotate(90deg);will-change:auto;color:#8c8c8c">Console</div>
<div class="t" style="left:463.2px;top:597.3px;color:#6e6e6e;letter-spacing:-0.4px">100%</div>
<div class="t" style="left:591.2px;top:597.3px;color:#8a8a8a">Type</div>
<svg style="left:433px;top:609.5px" width="16" height="22"><path d="M1.5,1.5 V17 L5.1,13.6 L7.8,19.4 L10,18.4 L7.4,12.8 L12.3,12.6 Z" fill="#f4f4f4" stroke="#111" stroke-width="1" stroke-linejoin="round"/></svg>

</body></html>
